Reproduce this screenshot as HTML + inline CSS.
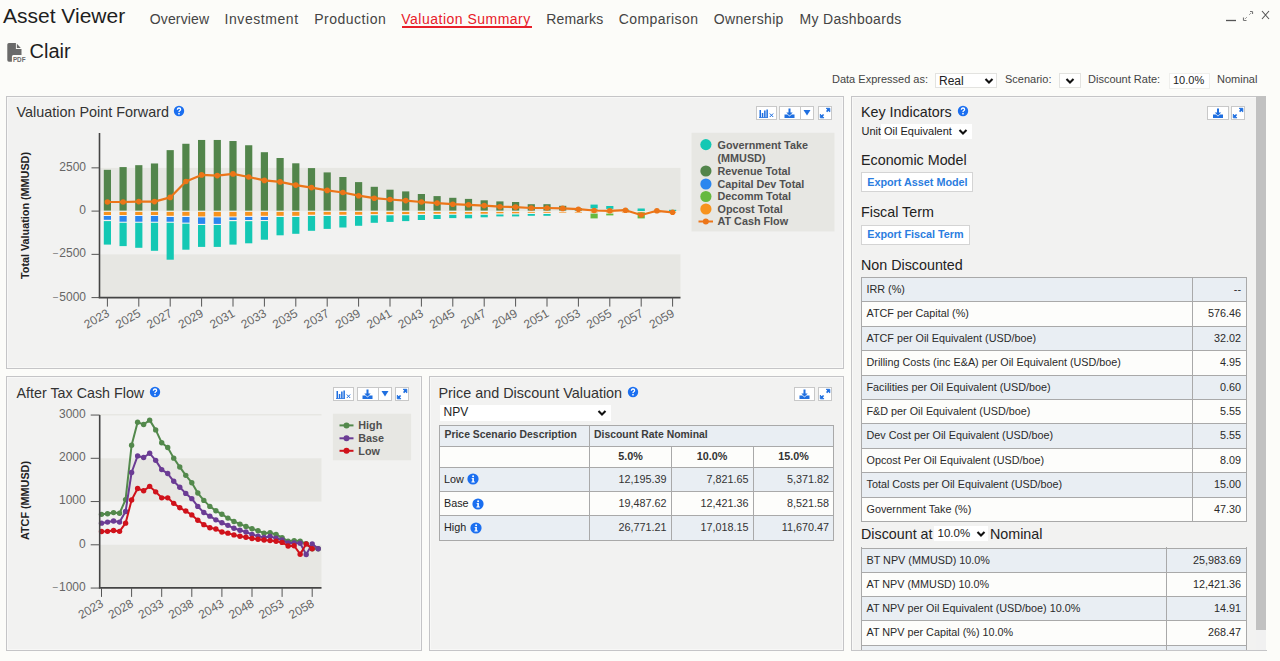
<!DOCTYPE html>
<html><head><meta charset="utf-8"><style>
html,body{margin:0;padding:0;}
body{width:1280px;height:661px;overflow:hidden;position:relative;background:#fcfcf9;font-family:"Liberation Sans", sans-serif;}
.t{position:absolute;white-space:nowrap;}
</style></head><body>
<div class="t" style="left:3.00px;top:4.97px;font-size:21px;line-height:21px;font-weight:400;color:#1e1e1e;">Asset Viewer</div>
<div class="t" style="left:149.80px;top:11.85px;font-size:14px;line-height:14px;font-weight:400;color:#444;letter-spacing:0.125px">Overview</div>
<div class="t" style="left:224.60px;top:11.85px;font-size:14px;line-height:14px;font-weight:400;color:#444;letter-spacing:0.550px">Investment</div>
<div class="t" style="left:314.20px;top:11.85px;font-size:14px;line-height:14px;font-weight:400;color:#444;letter-spacing:0.510px">Production</div>
<div class="t" style="left:401.30px;top:11.85px;font-size:14px;line-height:14px;font-weight:400;color:#e8202a;letter-spacing:0.488px">Valuation Summary</div>
<div class="t" style="left:546.20px;top:11.85px;font-size:14px;line-height:14px;font-weight:400;color:#444;letter-spacing:0.171px">Remarks</div>
<div class="t" style="left:618.70px;top:11.85px;font-size:14px;line-height:14px;font-weight:400;color:#444;letter-spacing:0.420px">Comparison</div>
<div class="t" style="left:713.80px;top:11.85px;font-size:14px;line-height:14px;font-weight:400;color:#444;letter-spacing:0.333px">Ownership</div>
<div class="t" style="left:799.50px;top:11.85px;font-size:14px;line-height:14px;font-weight:400;color:#444;letter-spacing:0.308px">My Dashboards</div>
<div style="position:absolute;left:402px;top:25.5px;width:130px;height:2px;background:#e8202a"></div>
<svg style="position:absolute;left:1220px;top:5px" width="60" height="22">
<line x1="6" y1="15.5" x2="16" y2="15.5" stroke="#555" stroke-width="1.3"/>
<path d="M25 14 L27 12 M29 10 L31 8" stroke="#999" stroke-width="0.9"/><path d="M23.5 15.5 L23.5 12.5 M23.5 15.5 L26.5 15.5" stroke="#777" stroke-width="1.2"/>
<path d="M32.5 6.5 L32.5 9 M32.5 6.5 L30 6.5" stroke="#777" stroke-width="1.2"/>
<path d="M42 6 L49 14 M49 6 L42 14" stroke="#555" stroke-width="1.1"/>
</svg>
<svg style="position:absolute;left:6px;top:42px" width="22" height="22" viewBox="0 0 22 22">
<path d="M1.3 2.6 Q1.3 1 2.9 1 L9.9 1 L9.9 6.9 L15.5 6.9 L15.5 12.9 L7.4 12.9 Q5.9 12.9 5.9 14.4 L5.9 19.7 L2.9 19.7 Q1.3 19.7 1.3 18.1 Z" fill="#6a6a6a"/>
<path d="M10.9 1.8 L10.9 5.9 L14.8 5.9 Z" fill="#6a6a6a"/>
<text x="6.9" y="19.9" font-family="Liberation Sans" font-size="8" font-weight="700" fill="#6a6a6a" textLength="12.6" lengthAdjust="spacingAndGlyphs">PDF</text>
</svg>
<div class="t" style="left:29.50px;top:40.82px;font-size:20px;line-height:20px;font-weight:400;color:#1e1e1e;">Clair</div>
<div class="t" style="left:832.00px;top:74.19px;font-size:11px;line-height:11px;font-weight:400;color:#444;">Data Expressed as:</div>
<div style="position:absolute;left:935px;top:73px;width:62px;height:15px;background:#fff;border:1px solid #e3e3e0;box-sizing:border-box"></div>
<div class="t" style="left:939.00px;top:74.84px;font-size:12px;line-height:12px;font-weight:400;color:#222;">Real</div>
<div class="t" style="left:1005.00px;top:74.19px;font-size:11px;line-height:11px;font-weight:400;color:#444;">Scenario:</div>
<div style="position:absolute;left:1059px;top:73px;width:22px;height:15px;background:#fff;border:1px solid #e3e3e0;box-sizing:border-box"></div>
<div class="t" style="left:1088.00px;top:74.19px;font-size:11px;line-height:11px;font-weight:400;color:#444;">Discount Rate:</div>
<div style="position:absolute;left:1169px;top:73px;width:41px;height:16px;background:#fff;border:1px solid #efefec;box-sizing:border-box"></div>
<div class="t" style="left:1173.00px;top:75.19px;font-size:11px;line-height:11px;font-weight:400;color:#222;">10.0%</div>
<div class="t" style="left:1217.00px;top:74.19px;font-size:11px;line-height:11px;font-weight:400;color:#444;">Nominal</div>
<svg style="position:absolute;left:984px;top:76.5px" width="10" height="8"><path d="M1.5 2 L5 5.5 L8.5 2" fill="none" stroke="#111" stroke-width="2.1"/></svg>
<svg style="position:absolute;left:1065px;top:76.5px" width="10" height="8"><path d="M1.5 2 L5 5.5 L8.5 2" fill="none" stroke="#111" stroke-width="2.1"/></svg>
<div style="position:absolute;left:6px;top:96px;width:838px;height:273px;background:#f2f2f1;border:1px solid #c5c5c7;box-sizing:border-box;box-shadow:inset 0 0 0 1px #f8f8f7"></div>
<div style="position:absolute;left:6px;top:376px;width:416px;height:275px;background:#f2f2f1;border:1px solid #c5c5c7;box-sizing:border-box;box-shadow:inset 0 0 0 1px #f8f8f7"></div>
<div style="position:absolute;left:429px;top:376px;width:415px;height:275px;background:#f2f2f1;border:1px solid #c5c5c7;box-sizing:border-box;box-shadow:inset 0 0 0 1px #f8f8f7"></div>
<div style="position:absolute;left:756px;top:106px;width:21px;height:14px;background:#fff;border:1px solid #c8c8c8;box-sizing:border-box"></div>
<svg style="position:absolute;left:756px;top:106px" width="21" height="14"><path d="M3.5 4 h1.5 v7.5 h-1.5z M5.8 7 h1.5 v4.5 h-1.5z M8.1 4.5 h1.5 v7 h-1.5z M10.4 3.5 h1.5 v8 h-1.5z" fill="#1f6fe0"/><path d="M3 11.5 h9" stroke="#1f6fe0" stroke-width="0.8"/><path d="M13.8 7.5 L17.2 11 M17.2 7.5 L13.8 11" stroke="#1f6fe0" stroke-width="1"/></svg>
<div style="position:absolute;left:779px;top:106px;width:35px;height:14px;background:#fff;border:1px solid #c8c8c8;box-sizing:border-box"></div>
<div style="position:absolute;left:800px;top:106px;width:1px;height:14px;background:#c8c8c8"></div>
<svg style="position:absolute;left:779px;top:106px" width="21" height="14"><path d="M9.5 2.5 h2 v4 h2.2 l-3.2 3.2 l-3.2 -3.2 h2.2z" fill="#1f6fe0"/><path d="M5.5 8.5 h3 l2 2 l2 -2 h3 v3.5 h-10z" fill="#1f6fe0"/></svg>
<svg style="position:absolute;left:800px;top:106px" width="14" height="14"><path d="M3.5 4 h7 l-3.5 5.5z" fill="#1f6fe0"/></svg>
<div style="position:absolute;left:818px;top:106px;width:14px;height:14px;background:#fff;border:1px solid #c8c8c8;box-sizing:border-box"></div>
<svg style="position:absolute;left:818px;top:106px" width="14" height="14"><path d="M8.2 2.3 h3.6 v3.6 z" fill="#1f6fe0" stroke="#1f6fe0" stroke-width="0.9" stroke-linejoin="round"/><path d="M10.6 3.6 L8.6 5.6" stroke="#1f6fe0" stroke-width="1.7"/><path d="M2.3 11.8 h3.6 l-3.6 -3.6 z" fill="#1f6fe0" stroke="#1f6fe0" stroke-width="0.9" stroke-linejoin="round"/><path d="M3.6 10.5 L5.6 8.5" stroke="#1f6fe0" stroke-width="1.7"/></svg>
<div style="position:absolute;left:333px;top:387px;width:21px;height:14px;background:#fff;border:1px solid #c8c8c8;box-sizing:border-box"></div>
<svg style="position:absolute;left:333px;top:387px" width="21" height="14"><path d="M3.5 4 h1.5 v7.5 h-1.5z M5.8 7 h1.5 v4.5 h-1.5z M8.1 4.5 h1.5 v7 h-1.5z M10.4 3.5 h1.5 v8 h-1.5z" fill="#1f6fe0"/><path d="M3 11.5 h9" stroke="#1f6fe0" stroke-width="0.8"/><path d="M13.8 7.5 L17.2 11 M17.2 7.5 L13.8 11" stroke="#1f6fe0" stroke-width="1"/></svg>
<div style="position:absolute;left:357px;top:387px;width:35px;height:14px;background:#fff;border:1px solid #c8c8c8;box-sizing:border-box"></div>
<div style="position:absolute;left:378px;top:387px;width:1px;height:14px;background:#c8c8c8"></div>
<svg style="position:absolute;left:357px;top:387px" width="21" height="14"><path d="M9.5 2.5 h2 v4 h2.2 l-3.2 3.2 l-3.2 -3.2 h2.2z" fill="#1f6fe0"/><path d="M5.5 8.5 h3 l2 2 l2 -2 h3 v3.5 h-10z" fill="#1f6fe0"/></svg>
<svg style="position:absolute;left:378px;top:387px" width="14" height="14"><path d="M3.5 4 h7 l-3.5 5.5z" fill="#1f6fe0"/></svg>
<div style="position:absolute;left:395px;top:387px;width:14px;height:14px;background:#fff;border:1px solid #c8c8c8;box-sizing:border-box"></div>
<svg style="position:absolute;left:395px;top:387px" width="14" height="14"><path d="M8.2 2.3 h3.6 v3.6 z" fill="#1f6fe0" stroke="#1f6fe0" stroke-width="0.9" stroke-linejoin="round"/><path d="M10.6 3.6 L8.6 5.6" stroke="#1f6fe0" stroke-width="1.7"/><path d="M2.3 11.8 h3.6 l-3.6 -3.6 z" fill="#1f6fe0" stroke="#1f6fe0" stroke-width="0.9" stroke-linejoin="round"/><path d="M3.6 10.5 L5.6 8.5" stroke="#1f6fe0" stroke-width="1.7"/></svg>
<div style="position:absolute;left:794px;top:387px;width:21px;height:14px;background:#fff;border:1px solid #c8c8c8;box-sizing:border-box"></div>
<svg style="position:absolute;left:794px;top:387px" width="21" height="14"><path d="M9.5 2.5 h2 v4 h2.2 l-3.2 3.2 l-3.2 -3.2 h2.2z" fill="#1f6fe0"/><path d="M5.5 8.5 h3 l2 2 l2 -2 h3 v3.5 h-10z" fill="#1f6fe0"/></svg>
<div style="position:absolute;left:818px;top:387px;width:14px;height:14px;background:#fff;border:1px solid #c8c8c8;box-sizing:border-box"></div>
<svg style="position:absolute;left:818px;top:387px" width="14" height="14"><path d="M8.2 2.3 h3.6 v3.6 z" fill="#1f6fe0" stroke="#1f6fe0" stroke-width="0.9" stroke-linejoin="round"/><path d="M10.6 3.6 L8.6 5.6" stroke="#1f6fe0" stroke-width="1.7"/><path d="M2.3 11.8 h3.6 l-3.6 -3.6 z" fill="#1f6fe0" stroke="#1f6fe0" stroke-width="0.9" stroke-linejoin="round"/><path d="M3.6 10.5 L5.6 8.5" stroke="#1f6fe0" stroke-width="1.7"/></svg>
<div class="t" style="left:16.50px;top:104.71px;font-size:14.4px;line-height:14.4px;font-weight:400;color:#333;">Valuation Point Forward</div>
<svg style="position:absolute;left:172.9px;top:105.4px" width="12" height="12" viewBox="0 0 12 12"><circle cx="6" cy="6" r="5.2" fill="#1b6ff0"/><path d="M4.4 4.7 Q4.4 3 6 3 Q7.6 3 7.6 4.5 Q7.6 5.3 6.7 5.8 Q6 6.2 6 7" fill="none" stroke="#fff" stroke-width="1.3"/><circle cx="6" cy="8.7" r="0.85" fill="#fff"/></svg>
<div class="t" style="left:16.50px;top:385.70px;font-size:14.3px;line-height:14.3px;font-weight:400;color:#333;">After Tax Cash Flow</div>
<svg style="position:absolute;left:149.2px;top:385.9px" width="12" height="12" viewBox="0 0 12 12"><circle cx="6" cy="6" r="5.2" fill="#1b6ff0"/><path d="M4.4 4.7 Q4.4 3 6 3 Q7.6 3 7.6 4.5 Q7.6 5.3 6.7 5.8 Q6 6.2 6 7" fill="none" stroke="#fff" stroke-width="1.3"/><circle cx="6" cy="8.7" r="0.85" fill="#fff"/></svg>
<div class="t" style="left:438.40px;top:385.81px;font-size:14.4px;line-height:14.4px;font-weight:400;color:#333;">Price and Discount Valuation</div>
<svg style="position:absolute;left:627px;top:386.3px" width="12" height="12" viewBox="0 0 12 12"><circle cx="6" cy="6" r="5.2" fill="#1b6ff0"/><path d="M4.4 4.7 Q4.4 3 6 3 Q7.6 3 7.6 4.5 Q7.6 5.3 6.7 5.8 Q6 6.2 6 7" fill="none" stroke="#fff" stroke-width="1.3"/><circle cx="6" cy="8.7" r="0.85" fill="#fff"/></svg>
<svg style="position:absolute;left:0;top:0" width="1280" height="661" font-family="Liberation Sans, sans-serif"><rect x="99.5" y="167.85" width="581.0" height="43.25" fill="#e7e7e3"/><rect x="99.5" y="254.35" width="581.0" height="43.25" fill="#e7e7e3"/><rect x="103.80" y="169.83" width="7.2" height="40.77" fill="#52854b"/><rect x="103.80" y="211.90" width="7.2" height="3.10" fill="#f7931e"/><rect x="103.80" y="216.00" width="7.2" height="3.80" fill="#2a86ef"/><rect x="103.80" y="221.10" width="7.2" height="23.50" fill="#14c8b4"/><rect x="119.50" y="167.08" width="7.2" height="43.52" fill="#52854b"/><rect x="119.50" y="211.90" width="7.2" height="3.10" fill="#f7931e"/><rect x="119.50" y="216.00" width="7.2" height="5.70" fill="#2a86ef"/><rect x="119.50" y="222.80" width="7.2" height="23.30" fill="#14c8b4"/><rect x="135.20" y="165.17" width="7.2" height="45.43" fill="#52854b"/><rect x="135.20" y="211.90" width="7.2" height="3.10" fill="#f7931e"/><rect x="135.20" y="216.00" width="7.2" height="5.70" fill="#2a86ef"/><rect x="135.20" y="222.80" width="7.2" height="25.00" fill="#14c8b4"/><rect x="150.90" y="163.47" width="7.2" height="47.13" fill="#52854b"/><rect x="150.90" y="211.90" width="7.2" height="3.10" fill="#f7931e"/><rect x="150.90" y="216.00" width="7.2" height="5.70" fill="#2a86ef"/><rect x="150.90" y="222.80" width="7.2" height="28.00" fill="#14c8b4"/><rect x="166.60" y="150.13" width="7.2" height="60.47" fill="#52854b"/><rect x="166.60" y="211.90" width="7.2" height="3.90" fill="#f7931e"/><rect x="166.60" y="217.00" width="7.2" height="4.70" fill="#2a86ef"/><rect x="166.60" y="222.80" width="7.2" height="36.90" fill="#14c8b4"/><rect x="182.30" y="143.77" width="7.2" height="66.83" fill="#52854b"/><rect x="182.30" y="211.90" width="7.2" height="3.90" fill="#f7931e"/><rect x="182.30" y="217.00" width="7.2" height="5.60" fill="#2a86ef"/><rect x="182.30" y="223.70" width="7.2" height="26.00" fill="#14c8b4"/><rect x="198.00" y="139.96" width="7.2" height="70.64" fill="#52854b"/><rect x="198.00" y="211.90" width="7.2" height="4.50" fill="#f7931e"/><rect x="198.00" y="217.40" width="7.2" height="6.50" fill="#2a86ef"/><rect x="198.00" y="225.00" width="7.2" height="21.90" fill="#14c8b4"/><rect x="213.70" y="139.96" width="7.2" height="70.64" fill="#52854b"/><rect x="213.70" y="211.90" width="7.2" height="4.50" fill="#f7931e"/><rect x="213.70" y="217.40" width="7.2" height="6.50" fill="#2a86ef"/><rect x="213.70" y="225.00" width="7.2" height="21.90" fill="#14c8b4"/><rect x="229.40" y="141.02" width="7.2" height="69.58" fill="#52854b"/><rect x="229.40" y="211.90" width="7.2" height="4.50" fill="#f7931e"/><rect x="229.40" y="217.40" width="7.2" height="2.60" fill="#2a86ef"/><rect x="229.40" y="221.20" width="7.2" height="23.40" fill="#14c8b4"/><rect x="245.10" y="145.25" width="7.2" height="65.35" fill="#52854b"/><rect x="245.10" y="211.90" width="7.2" height="3.90" fill="#f7931e"/><rect x="245.10" y="217.00" width="7.2" height="3.00" fill="#2a86ef"/><rect x="245.10" y="221.20" width="7.2" height="22.10" fill="#14c8b4"/><rect x="260.80" y="152.20" width="7.2" height="58.40" fill="#52854b"/><rect x="260.80" y="211.90" width="7.2" height="3.90" fill="#f7931e"/><rect x="260.80" y="217.00" width="7.2" height="3.00" fill="#2a86ef"/><rect x="260.80" y="221.10" width="7.2" height="18.60" fill="#14c8b4"/><rect x="276.50" y="158.00" width="7.2" height="52.60" fill="#52854b"/><rect x="276.50" y="211.90" width="7.2" height="3.90" fill="#f7931e"/><rect x="276.50" y="217.00" width="7.2" height="18.30" fill="#14c8b4"/><rect x="292.20" y="163.30" width="7.2" height="47.30" fill="#52854b"/><rect x="292.20" y="211.90" width="7.2" height="3.90" fill="#f7931e"/><rect x="292.20" y="217.00" width="7.2" height="16.80" fill="#14c8b4"/><rect x="307.90" y="168.10" width="7.2" height="42.50" fill="#52854b"/><rect x="307.90" y="211.90" width="7.2" height="2.80" fill="#f7931e"/><rect x="307.90" y="216.00" width="7.2" height="14.80" fill="#14c8b4"/><rect x="323.60" y="172.40" width="7.2" height="38.20" fill="#52854b"/><rect x="323.60" y="211.90" width="7.2" height="2.80" fill="#f7931e"/><rect x="323.60" y="216.00" width="7.2" height="12.90" fill="#14c8b4"/><rect x="339.30" y="177.00" width="7.2" height="33.60" fill="#52854b"/><rect x="339.30" y="211.90" width="7.2" height="2.80" fill="#f7931e"/><rect x="339.30" y="216.00" width="7.2" height="11.50" fill="#14c8b4"/><rect x="355.00" y="182.10" width="7.2" height="28.50" fill="#52854b"/><rect x="355.00" y="211.90" width="7.2" height="2.80" fill="#f7931e"/><rect x="355.00" y="216.00" width="7.2" height="9.80" fill="#14c8b4"/><rect x="370.70" y="186.80" width="7.2" height="23.80" fill="#52854b"/><rect x="370.70" y="211.90" width="7.2" height="2.20" fill="#f7931e"/><rect x="370.70" y="215.30" width="7.2" height="7.50" fill="#14c8b4"/><rect x="386.40" y="189.70" width="7.2" height="20.90" fill="#52854b"/><rect x="386.40" y="211.90" width="7.2" height="2.20" fill="#f7931e"/><rect x="386.40" y="215.30" width="7.2" height="6.60" fill="#14c8b4"/><rect x="402.10" y="191.40" width="7.2" height="19.20" fill="#52854b"/><rect x="402.10" y="211.90" width="7.2" height="2.20" fill="#f7931e"/><rect x="402.10" y="215.30" width="7.2" height="5.80" fill="#14c8b4"/><rect x="417.80" y="194.00" width="7.2" height="16.60" fill="#52854b"/><rect x="417.80" y="212.00" width="7.2" height="1.70" fill="#f7931e"/><rect x="417.80" y="215.00" width="7.2" height="5.00" fill="#14c8b4"/><rect x="433.50" y="196.10" width="7.2" height="14.50" fill="#52854b"/><rect x="433.50" y="212.00" width="7.2" height="1.70" fill="#f7931e"/><rect x="433.50" y="215.00" width="7.2" height="4.00" fill="#14c8b4"/><rect x="449.20" y="197.80" width="7.2" height="12.80" fill="#52854b"/><rect x="449.20" y="212.00" width="7.2" height="1.70" fill="#f7931e"/><rect x="449.20" y="214.80" width="7.2" height="3.30" fill="#14c8b4"/><rect x="464.90" y="198.90" width="7.2" height="11.70" fill="#52854b"/><rect x="464.90" y="212.00" width="7.2" height="1.70" fill="#f7931e"/><rect x="464.90" y="214.80" width="7.2" height="3.50" fill="#14c8b4"/><rect x="480.60" y="200.30" width="7.2" height="10.30" fill="#52854b"/><rect x="480.60" y="212.00" width="7.2" height="1.70" fill="#f7931e"/><rect x="480.60" y="214.80" width="7.2" height="2.50" fill="#14c8b4"/><rect x="496.30" y="201.40" width="7.2" height="9.20" fill="#52854b"/><rect x="496.30" y="211.90" width="7.2" height="1.40" fill="#f7931e"/><rect x="496.30" y="214.50" width="7.2" height="1.90" fill="#14c8b4"/><rect x="512.00" y="202.00" width="7.2" height="8.60" fill="#52854b"/><rect x="512.00" y="211.90" width="7.2" height="1.40" fill="#f7931e"/><rect x="512.00" y="214.50" width="7.2" height="1.90" fill="#14c8b4"/><rect x="527.70" y="204.20" width="7.2" height="6.40" fill="#52854b"/><rect x="527.70" y="211.90" width="7.2" height="0.90" fill="#f7931e"/><rect x="527.70" y="214.00" width="7.2" height="1.80" fill="#14c8b4"/><rect x="543.40" y="204.20" width="7.2" height="6.40" fill="#52854b"/><rect x="543.40" y="211.90" width="7.2" height="0.90" fill="#f7931e"/><rect x="543.40" y="214.00" width="7.2" height="1.80" fill="#14c8b4"/><rect x="559.10" y="205.80" width="7.2" height="4.80" fill="#52854b"/><rect x="559.10" y="211.90" width="7.2" height="0.70" fill="#f7931e"/><rect x="574.80" y="208.30" width="7.2" height="2.30" fill="#52854b"/><rect x="574.80" y="211.90" width="7.2" height="0.70" fill="#f7931e"/><rect x="590.50" y="209.50" width="7.2" height="1.10" fill="#52854b"/><rect x="590.50" y="211.90" width="7.2" height="0.60" fill="#f7931e"/><rect x="606.20" y="210.20" width="7.2" height="0.40" fill="#52854b"/><rect x="606.20" y="211.90" width="7.2" height="0.60" fill="#f7931e"/><rect x="621.90" y="210.50" width="7.2" height="0.10" fill="#52854b"/><rect x="621.90" y="211.90" width="7.2" height="0.60" fill="#f7931e"/><rect x="637.60" y="210.30" width="7.2" height="0.30" fill="#52854b"/><rect x="637.60" y="211.90" width="7.2" height="0.60" fill="#f7931e"/><rect x="653.30" y="210.50" width="7.2" height="0.10" fill="#52854b"/><rect x="653.30" y="211.90" width="7.2" height="0.60" fill="#f7931e"/><rect x="669.00" y="211.90" width="7.2" height="0.60" fill="#f7931e"/><rect x="590.50" y="204.60" width="7.2" height="3.80" fill="#14c8b4"/><rect x="590.50" y="213.60" width="7.2" height="4.80" fill="#66b93f"/><rect x="606.20" y="206.00" width="7.2" height="2.90" fill="#14c8b4"/><rect x="606.20" y="213.60" width="7.2" height="1.80" fill="#66b93f"/><rect x="637.60" y="208.50" width="7.2" height="2.50" fill="#14c8b4"/><rect x="637.60" y="212.40" width="7.2" height="6.00" fill="#66b93f"/><rect x="669.00" y="209.80" width="7.2" height="1.20" fill="#14c8b4"/><rect x="574.80" y="209.00" width="7.2" height="1.20" fill="#14c8b4"/><rect x="621.90" y="209.50" width="7.2" height="0.80" fill="#14c8b4"/><polyline points="107.40,202.00 123.10,202.00 138.80,201.60 154.50,201.60 170.20,197.40 185.90,181.50 201.60,174.90 217.30,175.60 233.00,173.90 248.70,177.00 264.40,180.40 280.10,181.90 295.80,185.10 311.50,187.60 327.20,190.40 342.90,192.50 358.60,195.70 374.30,198.20 390.00,199.50 405.70,200.60 421.40,202.00 437.10,203.10 452.80,204.20 468.50,204.80 484.20,205.60 499.90,206.70 515.60,207.10 531.30,208.00 547.00,208.00 562.70,208.40 578.40,209.20 594.10,210.50 609.80,210.80 625.50,210.20 641.20,215.00 656.90,210.80 672.60,212.30" fill="none" stroke="#ec7518" stroke-width="2.2" stroke-linejoin="round"/><circle cx="107.40" cy="202.00" r="2.8" fill="#ec7518"/><circle cx="123.10" cy="202.00" r="2.8" fill="#ec7518"/><circle cx="138.80" cy="201.60" r="2.8" fill="#ec7518"/><circle cx="154.50" cy="201.60" r="2.8" fill="#ec7518"/><circle cx="170.20" cy="197.40" r="2.8" fill="#ec7518"/><circle cx="185.90" cy="181.50" r="2.8" fill="#ec7518"/><circle cx="201.60" cy="174.90" r="2.8" fill="#ec7518"/><circle cx="217.30" cy="175.60" r="2.8" fill="#ec7518"/><circle cx="233.00" cy="173.90" r="2.8" fill="#ec7518"/><circle cx="248.70" cy="177.00" r="2.8" fill="#ec7518"/><circle cx="264.40" cy="180.40" r="2.8" fill="#ec7518"/><circle cx="280.10" cy="181.90" r="2.8" fill="#ec7518"/><circle cx="295.80" cy="185.10" r="2.8" fill="#ec7518"/><circle cx="311.50" cy="187.60" r="2.8" fill="#ec7518"/><circle cx="327.20" cy="190.40" r="2.8" fill="#ec7518"/><circle cx="342.90" cy="192.50" r="2.8" fill="#ec7518"/><circle cx="358.60" cy="195.70" r="2.8" fill="#ec7518"/><circle cx="374.30" cy="198.20" r="2.8" fill="#ec7518"/><circle cx="390.00" cy="199.50" r="2.8" fill="#ec7518"/><circle cx="405.70" cy="200.60" r="2.8" fill="#ec7518"/><circle cx="421.40" cy="202.00" r="2.8" fill="#ec7518"/><circle cx="437.10" cy="203.10" r="2.8" fill="#ec7518"/><circle cx="452.80" cy="204.20" r="2.8" fill="#ec7518"/><circle cx="468.50" cy="204.80" r="2.8" fill="#ec7518"/><circle cx="484.20" cy="205.60" r="2.8" fill="#ec7518"/><circle cx="499.90" cy="206.70" r="2.8" fill="#ec7518"/><circle cx="515.60" cy="207.10" r="2.8" fill="#ec7518"/><circle cx="531.30" cy="208.00" r="2.8" fill="#ec7518"/><circle cx="547.00" cy="208.00" r="2.8" fill="#ec7518"/><circle cx="562.70" cy="208.40" r="2.8" fill="#ec7518"/><circle cx="578.40" cy="209.20" r="2.8" fill="#ec7518"/><circle cx="594.10" cy="210.50" r="2.8" fill="#ec7518"/><circle cx="609.80" cy="210.80" r="2.8" fill="#ec7518"/><circle cx="625.50" cy="210.20" r="2.8" fill="#ec7518"/><circle cx="641.20" cy="215.00" r="2.8" fill="#ec7518"/><circle cx="656.90" cy="210.80" r="2.8" fill="#ec7518"/><circle cx="672.60" cy="212.30" r="2.8" fill="#ec7518"/><line x1="99.5" y1="133" x2="99.5" y2="298.1" stroke="#444" stroke-width="1.6"/><line x1="98.7" y1="297.6" x2="680.5" y2="297.6" stroke="#444" stroke-width="1.8"/><line x1="91.5" y1="167.85" x2="99.5" y2="167.85" stroke="#555" stroke-width="1"/><text x="86.0" y="170.75" text-anchor="end" font-size="12" fill="#666">2500</text><line x1="91.5" y1="211.10" x2="99.5" y2="211.10" stroke="#555" stroke-width="1"/><text x="86.0" y="214.00" text-anchor="end" font-size="12" fill="#666">0</text><line x1="91.5" y1="254.35" x2="99.5" y2="254.35" stroke="#555" stroke-width="1"/><text x="86.0" y="257.25" text-anchor="end" font-size="12" fill="#666"><tspan font-size="9" dy="-1">&#8211;</tspan><tspan dx="1.2" dy="1">2500</tspan></text><line x1="91.5" y1="297.60" x2="99.5" y2="297.60" stroke="#555" stroke-width="1"/><text x="86.0" y="300.50" text-anchor="end" font-size="12" fill="#666"><tspan font-size="9" dy="-1">&#8211;</tspan><tspan dx="1.2" dy="1">5000</tspan></text><line x1="107.40" y1="297.6" x2="107.40" y2="306.6" stroke="#555" stroke-width="1"/><text transform="translate(110.20,315.6) rotate(-30)" text-anchor="end" font-size="12" fill="#666">2023</text><line x1="138.80" y1="297.6" x2="138.80" y2="306.6" stroke="#555" stroke-width="1"/><text transform="translate(141.60,315.6) rotate(-30)" text-anchor="end" font-size="12" fill="#666">2025</text><line x1="170.20" y1="297.6" x2="170.20" y2="306.6" stroke="#555" stroke-width="1"/><text transform="translate(173.00,315.6) rotate(-30)" text-anchor="end" font-size="12" fill="#666">2027</text><line x1="201.60" y1="297.6" x2="201.60" y2="306.6" stroke="#555" stroke-width="1"/><text transform="translate(204.40,315.6) rotate(-30)" text-anchor="end" font-size="12" fill="#666">2029</text><line x1="233.00" y1="297.6" x2="233.00" y2="306.6" stroke="#555" stroke-width="1"/><text transform="translate(235.80,315.6) rotate(-30)" text-anchor="end" font-size="12" fill="#666">2031</text><line x1="264.40" y1="297.6" x2="264.40" y2="306.6" stroke="#555" stroke-width="1"/><text transform="translate(267.20,315.6) rotate(-30)" text-anchor="end" font-size="12" fill="#666">2033</text><line x1="295.80" y1="297.6" x2="295.80" y2="306.6" stroke="#555" stroke-width="1"/><text transform="translate(298.60,315.6) rotate(-30)" text-anchor="end" font-size="12" fill="#666">2035</text><line x1="327.20" y1="297.6" x2="327.20" y2="306.6" stroke="#555" stroke-width="1"/><text transform="translate(330.00,315.6) rotate(-30)" text-anchor="end" font-size="12" fill="#666">2037</text><line x1="358.60" y1="297.6" x2="358.60" y2="306.6" stroke="#555" stroke-width="1"/><text transform="translate(361.40,315.6) rotate(-30)" text-anchor="end" font-size="12" fill="#666">2039</text><line x1="390.00" y1="297.6" x2="390.00" y2="306.6" stroke="#555" stroke-width="1"/><text transform="translate(392.80,315.6) rotate(-30)" text-anchor="end" font-size="12" fill="#666">2041</text><line x1="421.40" y1="297.6" x2="421.40" y2="306.6" stroke="#555" stroke-width="1"/><text transform="translate(424.20,315.6) rotate(-30)" text-anchor="end" font-size="12" fill="#666">2043</text><line x1="452.80" y1="297.6" x2="452.80" y2="306.6" stroke="#555" stroke-width="1"/><text transform="translate(455.60,315.6) rotate(-30)" text-anchor="end" font-size="12" fill="#666">2045</text><line x1="484.20" y1="297.6" x2="484.20" y2="306.6" stroke="#555" stroke-width="1"/><text transform="translate(487.00,315.6) rotate(-30)" text-anchor="end" font-size="12" fill="#666">2047</text><line x1="515.60" y1="297.6" x2="515.60" y2="306.6" stroke="#555" stroke-width="1"/><text transform="translate(518.40,315.6) rotate(-30)" text-anchor="end" font-size="12" fill="#666">2049</text><line x1="547.00" y1="297.6" x2="547.00" y2="306.6" stroke="#555" stroke-width="1"/><text transform="translate(549.80,315.6) rotate(-30)" text-anchor="end" font-size="12" fill="#666">2051</text><line x1="578.40" y1="297.6" x2="578.40" y2="306.6" stroke="#555" stroke-width="1"/><text transform="translate(581.20,315.6) rotate(-30)" text-anchor="end" font-size="12" fill="#666">2053</text><line x1="609.80" y1="297.6" x2="609.80" y2="306.6" stroke="#555" stroke-width="1"/><text transform="translate(612.60,315.6) rotate(-30)" text-anchor="end" font-size="12" fill="#666">2055</text><line x1="641.20" y1="297.6" x2="641.20" y2="306.6" stroke="#555" stroke-width="1"/><text transform="translate(644.00,315.6) rotate(-30)" text-anchor="end" font-size="12" fill="#666">2057</text><line x1="672.60" y1="297.6" x2="672.60" y2="306.6" stroke="#555" stroke-width="1"/><text transform="translate(675.40,315.6) rotate(-30)" text-anchor="end" font-size="12" fill="#666">2059</text><text transform="translate(28.6,215.5) rotate(-90)" text-anchor="middle" font-size="10.8" font-weight="700" fill="#222">Total Valuation (MMUSD)</text><rect x="691.5" y="132.8" width="143" height="98.6" fill="#e7e7e3"/><circle cx="705.9" cy="144.6" r="5.6" fill="#14c8b4"/><text x="717.5" y="148.5" font-size="10.8" font-weight="700" fill="#505050">Government Take</text><text x="717.5" y="161.9" font-size="10.8" font-weight="700" fill="#505050">(MMUSD)</text><circle cx="705.9" cy="171.0" r="5.6" fill="#52854b"/><text x="717.5" y="174.9" font-size="10.8" font-weight="700" fill="#505050">Revenue Total</text><circle cx="705.9" cy="184.0" r="5.6" fill="#2a86ef"/><text x="717.5" y="187.9" font-size="10.8" font-weight="700" fill="#505050">Capital Dev Total</text><circle cx="705.9" cy="196.5" r="5.6" fill="#66b93f"/><text x="717.5" y="200.4" font-size="10.8" font-weight="700" fill="#505050">Decomm Total</text><circle cx="705.9" cy="209.0" r="5.6" fill="#f7931e"/><text x="717.5" y="212.9" font-size="10.8" font-weight="700" fill="#505050">Opcost Total</text><line x1="698.5" y1="221.5" x2="713" y2="221.5" stroke="#ec7518" stroke-width="2"/><circle cx="705.8" cy="221.5" r="3" fill="#ec7518"/><text x="717.5" y="225.4" font-size="10.8" font-weight="700" fill="#505050">AT Cash Flow</text><rect x="99.7" y="458.30" width="221.8" height="43.25" fill="#e7e7e3"/><rect x="99.7" y="544.80" width="221.8" height="43.25" fill="#e7e7e3"/><rect x="99.7" y="414.0" width="221.8" height="1.5" fill="#e7e7e3"/><polyline points="101.50,514.35 107.52,513.70 113.54,512.58 119.56,513.27 125.58,499.60 131.60,445.32 137.62,422.14 143.64,424.56 149.66,420.15 155.68,429.88 161.70,442.69 167.72,447.53 173.74,458.13 179.76,466.95 185.78,475.34 191.80,482.69 197.82,493.07 203.84,500.38 209.86,506.39 215.88,510.81 221.90,514.22 227.92,518.11 233.94,521.44 239.96,524.17 245.98,526.38 252.00,528.75 258.02,530.70 264.04,533.17 270.06,532.69 276.08,534.51 282.10,537.62 288.12,541.21 294.14,540.60 300.16,541.21 306.18,543.72 312.20,548.69 318.22,548.69" fill="none" stroke="#53894c" stroke-width="2" stroke-linejoin="round"/><circle cx="101.50" cy="514.35" r="2.7" fill="#53894c"/><circle cx="107.52" cy="513.70" r="2.7" fill="#53894c"/><circle cx="113.54" cy="512.58" r="2.7" fill="#53894c"/><circle cx="119.56" cy="513.27" r="2.7" fill="#53894c"/><circle cx="125.58" cy="499.60" r="2.7" fill="#53894c"/><circle cx="131.60" cy="445.32" r="2.7" fill="#53894c"/><circle cx="137.62" cy="422.14" r="2.7" fill="#53894c"/><circle cx="143.64" cy="424.56" r="2.7" fill="#53894c"/><circle cx="149.66" cy="420.15" r="2.7" fill="#53894c"/><circle cx="155.68" cy="429.88" r="2.7" fill="#53894c"/><circle cx="161.70" cy="442.69" r="2.7" fill="#53894c"/><circle cx="167.72" cy="447.53" r="2.7" fill="#53894c"/><circle cx="173.74" cy="458.13" r="2.7" fill="#53894c"/><circle cx="179.76" cy="466.95" r="2.7" fill="#53894c"/><circle cx="185.78" cy="475.34" r="2.7" fill="#53894c"/><circle cx="191.80" cy="482.69" r="2.7" fill="#53894c"/><circle cx="197.82" cy="493.07" r="2.7" fill="#53894c"/><circle cx="203.84" cy="500.38" r="2.7" fill="#53894c"/><circle cx="209.86" cy="506.39" r="2.7" fill="#53894c"/><circle cx="215.88" cy="510.81" r="2.7" fill="#53894c"/><circle cx="221.90" cy="514.22" r="2.7" fill="#53894c"/><circle cx="227.92" cy="518.11" r="2.7" fill="#53894c"/><circle cx="233.94" cy="521.44" r="2.7" fill="#53894c"/><circle cx="239.96" cy="524.17" r="2.7" fill="#53894c"/><circle cx="245.98" cy="526.38" r="2.7" fill="#53894c"/><circle cx="252.00" cy="528.75" r="2.7" fill="#53894c"/><circle cx="258.02" cy="530.70" r="2.7" fill="#53894c"/><circle cx="264.04" cy="533.17" r="2.7" fill="#53894c"/><circle cx="270.06" cy="532.69" r="2.7" fill="#53894c"/><circle cx="276.08" cy="534.51" r="2.7" fill="#53894c"/><circle cx="282.10" cy="537.62" r="2.7" fill="#53894c"/><circle cx="288.12" cy="541.21" r="2.7" fill="#53894c"/><circle cx="294.14" cy="540.60" r="2.7" fill="#53894c"/><circle cx="300.16" cy="541.21" r="2.7" fill="#53894c"/><circle cx="306.18" cy="543.72" r="2.7" fill="#53894c"/><circle cx="312.20" cy="548.69" r="2.7" fill="#53894c"/><circle cx="318.22" cy="548.69" r="2.7" fill="#53894c"/><polyline points="101.50,523.17 107.52,522.09 113.54,521.01 119.56,522.09 125.58,511.50 131.60,472.49 137.62,455.92 143.64,457.48 149.66,453.28 155.68,460.33 161.70,469.59 167.72,473.57 173.74,481.27 179.76,487.23 185.78,493.42 191.80,498.65 197.82,506.39 203.84,512.49 209.86,516.13 215.88,519.84 221.90,522.74 227.92,525.34 233.94,528.28 239.96,530.27 245.98,532.00 252.00,534.38 258.02,536.11 264.04,537.49 270.06,536.41 276.08,538.18 282.10,540.00 288.12,542.98 294.14,542.98 300.16,543.29 306.18,554.53 312.20,543.89 318.22,548.78" fill="none" stroke="#6b3c94" stroke-width="2" stroke-linejoin="round"/><circle cx="101.50" cy="523.17" r="2.7" fill="#6b3c94"/><circle cx="107.52" cy="522.09" r="2.7" fill="#6b3c94"/><circle cx="113.54" cy="521.01" r="2.7" fill="#6b3c94"/><circle cx="119.56" cy="522.09" r="2.7" fill="#6b3c94"/><circle cx="125.58" cy="511.50" r="2.7" fill="#6b3c94"/><circle cx="131.60" cy="472.49" r="2.7" fill="#6b3c94"/><circle cx="137.62" cy="455.92" r="2.7" fill="#6b3c94"/><circle cx="143.64" cy="457.48" r="2.7" fill="#6b3c94"/><circle cx="149.66" cy="453.28" r="2.7" fill="#6b3c94"/><circle cx="155.68" cy="460.33" r="2.7" fill="#6b3c94"/><circle cx="161.70" cy="469.59" r="2.7" fill="#6b3c94"/><circle cx="167.72" cy="473.57" r="2.7" fill="#6b3c94"/><circle cx="173.74" cy="481.27" r="2.7" fill="#6b3c94"/><circle cx="179.76" cy="487.23" r="2.7" fill="#6b3c94"/><circle cx="185.78" cy="493.42" r="2.7" fill="#6b3c94"/><circle cx="191.80" cy="498.65" r="2.7" fill="#6b3c94"/><circle cx="197.82" cy="506.39" r="2.7" fill="#6b3c94"/><circle cx="203.84" cy="512.49" r="2.7" fill="#6b3c94"/><circle cx="209.86" cy="516.13" r="2.7" fill="#6b3c94"/><circle cx="215.88" cy="519.84" r="2.7" fill="#6b3c94"/><circle cx="221.90" cy="522.74" r="2.7" fill="#6b3c94"/><circle cx="227.92" cy="525.34" r="2.7" fill="#6b3c94"/><circle cx="233.94" cy="528.28" r="2.7" fill="#6b3c94"/><circle cx="239.96" cy="530.27" r="2.7" fill="#6b3c94"/><circle cx="245.98" cy="532.00" r="2.7" fill="#6b3c94"/><circle cx="252.00" cy="534.38" r="2.7" fill="#6b3c94"/><circle cx="258.02" cy="536.11" r="2.7" fill="#6b3c94"/><circle cx="264.04" cy="537.49" r="2.7" fill="#6b3c94"/><circle cx="270.06" cy="536.41" r="2.7" fill="#6b3c94"/><circle cx="276.08" cy="538.18" r="2.7" fill="#6b3c94"/><circle cx="282.10" cy="540.00" r="2.7" fill="#6b3c94"/><circle cx="288.12" cy="542.98" r="2.7" fill="#6b3c94"/><circle cx="294.14" cy="542.98" r="2.7" fill="#6b3c94"/><circle cx="300.16" cy="543.29" r="2.7" fill="#6b3c94"/><circle cx="306.18" cy="554.53" r="2.7" fill="#6b3c94"/><circle cx="312.20" cy="543.89" r="2.7" fill="#6b3c94"/><circle cx="318.22" cy="548.78" r="2.7" fill="#6b3c94"/><polyline points="101.50,531.57 107.52,531.35 113.54,530.48 119.56,531.35 125.58,523.17 131.60,500.04 137.62,488.57 143.64,490.74 149.66,486.37 155.68,491.86 161.70,497.83 167.72,497.83 173.74,503.37 179.76,507.78 185.78,511.06 191.80,514.91 197.82,520.23 203.84,524.65 209.86,527.76 215.88,529.06 221.90,532.00 227.92,533.17 233.94,534.90 239.96,536.28 245.98,537.32 252.00,538.49 258.02,539.22 264.04,540.00 270.06,540.60 276.08,541.21 282.10,542.42 288.12,546.01 294.14,545.79 300.16,554.19 306.18,543.89 312.20,548.78" fill="none" stroke="#d0121b" stroke-width="2" stroke-linejoin="round"/><circle cx="101.50" cy="531.57" r="2.7" fill="#d0121b"/><circle cx="107.52" cy="531.35" r="2.7" fill="#d0121b"/><circle cx="113.54" cy="530.48" r="2.7" fill="#d0121b"/><circle cx="119.56" cy="531.35" r="2.7" fill="#d0121b"/><circle cx="125.58" cy="523.17" r="2.7" fill="#d0121b"/><circle cx="131.60" cy="500.04" r="2.7" fill="#d0121b"/><circle cx="137.62" cy="488.57" r="2.7" fill="#d0121b"/><circle cx="143.64" cy="490.74" r="2.7" fill="#d0121b"/><circle cx="149.66" cy="486.37" r="2.7" fill="#d0121b"/><circle cx="155.68" cy="491.86" r="2.7" fill="#d0121b"/><circle cx="161.70" cy="497.83" r="2.7" fill="#d0121b"/><circle cx="167.72" cy="497.83" r="2.7" fill="#d0121b"/><circle cx="173.74" cy="503.37" r="2.7" fill="#d0121b"/><circle cx="179.76" cy="507.78" r="2.7" fill="#d0121b"/><circle cx="185.78" cy="511.06" r="2.7" fill="#d0121b"/><circle cx="191.80" cy="514.91" r="2.7" fill="#d0121b"/><circle cx="197.82" cy="520.23" r="2.7" fill="#d0121b"/><circle cx="203.84" cy="524.65" r="2.7" fill="#d0121b"/><circle cx="209.86" cy="527.76" r="2.7" fill="#d0121b"/><circle cx="215.88" cy="529.06" r="2.7" fill="#d0121b"/><circle cx="221.90" cy="532.00" r="2.7" fill="#d0121b"/><circle cx="227.92" cy="533.17" r="2.7" fill="#d0121b"/><circle cx="233.94" cy="534.90" r="2.7" fill="#d0121b"/><circle cx="239.96" cy="536.28" r="2.7" fill="#d0121b"/><circle cx="245.98" cy="537.32" r="2.7" fill="#d0121b"/><circle cx="252.00" cy="538.49" r="2.7" fill="#d0121b"/><circle cx="258.02" cy="539.22" r="2.7" fill="#d0121b"/><circle cx="264.04" cy="540.00" r="2.7" fill="#d0121b"/><circle cx="270.06" cy="540.60" r="2.7" fill="#d0121b"/><circle cx="276.08" cy="541.21" r="2.7" fill="#d0121b"/><circle cx="282.10" cy="542.42" r="2.7" fill="#d0121b"/><circle cx="288.12" cy="546.01" r="2.7" fill="#d0121b"/><circle cx="294.14" cy="545.79" r="2.7" fill="#d0121b"/><circle cx="300.16" cy="554.19" r="2.7" fill="#d0121b"/><circle cx="306.18" cy="543.89" r="2.7" fill="#d0121b"/><circle cx="312.20" cy="548.78" r="2.7" fill="#d0121b"/><line x1="99.7" y1="415.0" x2="99.7" y2="588.4" stroke="#444" stroke-width="1.6"/><line x1="98.9" y1="587.9" x2="321.5" y2="587.9" stroke="#444" stroke-width="1.8"/><line x1="90.7" y1="415.05" x2="99.7" y2="415.05" stroke="#555" stroke-width="1"/><text x="85.7" y="417.95" text-anchor="end" font-size="12" fill="#666">3000</text><line x1="90.7" y1="458.30" x2="99.7" y2="458.30" stroke="#555" stroke-width="1"/><text x="85.7" y="461.20" text-anchor="end" font-size="12" fill="#666">2000</text><line x1="90.7" y1="501.55" x2="99.7" y2="501.55" stroke="#555" stroke-width="1"/><text x="85.7" y="504.45" text-anchor="end" font-size="12" fill="#666">1000</text><line x1="90.7" y1="544.80" x2="99.7" y2="544.80" stroke="#555" stroke-width="1"/><text x="85.7" y="547.70" text-anchor="end" font-size="12" fill="#666">0</text><line x1="90.7" y1="588.05" x2="99.7" y2="588.05" stroke="#555" stroke-width="1"/><text x="85.7" y="590.95" text-anchor="end" font-size="12" fill="#666"><tspan font-size="9" dy="-1">&#8211;</tspan><tspan dx="1.2" dy="1">1000</tspan></text><line x1="101.50" y1="587.9" x2="101.50" y2="596.9" stroke="#555" stroke-width="1"/><text transform="translate(104.30,605.9) rotate(-30)" text-anchor="end" font-size="12" fill="#666">2023</text><line x1="131.60" y1="587.9" x2="131.60" y2="596.9" stroke="#555" stroke-width="1"/><text transform="translate(134.40,605.9) rotate(-30)" text-anchor="end" font-size="12" fill="#666">2028</text><line x1="161.70" y1="587.9" x2="161.70" y2="596.9" stroke="#555" stroke-width="1"/><text transform="translate(164.50,605.9) rotate(-30)" text-anchor="end" font-size="12" fill="#666">2033</text><line x1="191.80" y1="587.9" x2="191.80" y2="596.9" stroke="#555" stroke-width="1"/><text transform="translate(194.60,605.9) rotate(-30)" text-anchor="end" font-size="12" fill="#666">2038</text><line x1="221.90" y1="587.9" x2="221.90" y2="596.9" stroke="#555" stroke-width="1"/><text transform="translate(224.70,605.9) rotate(-30)" text-anchor="end" font-size="12" fill="#666">2043</text><line x1="252.00" y1="587.9" x2="252.00" y2="596.9" stroke="#555" stroke-width="1"/><text transform="translate(254.80,605.9) rotate(-30)" text-anchor="end" font-size="12" fill="#666">2048</text><line x1="282.10" y1="587.9" x2="282.10" y2="596.9" stroke="#555" stroke-width="1"/><text transform="translate(284.90,605.9) rotate(-30)" text-anchor="end" font-size="12" fill="#666">2053</text><line x1="312.20" y1="587.9" x2="312.20" y2="596.9" stroke="#555" stroke-width="1"/><text transform="translate(315.00,605.9) rotate(-30)" text-anchor="end" font-size="12" fill="#666">2058</text><text transform="translate(29.1,500.5) rotate(-90)" text-anchor="middle" font-size="10.8" font-weight="700" fill="#222">ATCF (MMUSD)</text><rect x="332.9" y="413.7" width="78.2" height="46.6" fill="#e7e7e3"/><line x1="339.5" y1="425.4" x2="353.5" y2="425.4" stroke="#53894c" stroke-width="2"/><circle cx="346.5" cy="425.4" r="3" fill="#53894c"/><text x="358.3" y="429.29999999999995" font-size="10.8" font-weight="700" fill="#505050">High</text><line x1="339.5" y1="438.3" x2="353.5" y2="438.3" stroke="#6b3c94" stroke-width="2"/><circle cx="346.5" cy="438.3" r="3" fill="#6b3c94"/><text x="358.3" y="442.2" font-size="10.8" font-weight="700" fill="#505050">Base</text><line x1="339.5" y1="450.8" x2="353.5" y2="450.8" stroke="#d0121b" stroke-width="2"/><circle cx="346.5" cy="450.8" r="3" fill="#d0121b"/><text x="358.3" y="454.7" font-size="10.8" font-weight="700" fill="#505050">Low</text></svg>
<div style="position:absolute;left:440px;top:405px;width:171px;height:16px;background:#fff"></div>
<div class="t" style="left:443.50px;top:406.34px;font-size:12px;line-height:12px;font-weight:400;color:#222;">NPV</div>
<svg style="position:absolute;left:596.7px;top:408.5px" width="10" height="8"><path d="M1.5 2 L5 5.5 L8.5 2" fill="none" stroke="#111" stroke-width="2.1"/></svg>
<div style="position:absolute;left:439px;top:425px;width:395px;height:21px;background:#e9eef3"></div>
<div style="position:absolute;left:439px;top:446px;width:395px;height:21px;background:#fdfdfb"></div>
<div style="position:absolute;left:439px;top:467px;width:395px;height:24px;background:#e9eef3"></div>
<div style="position:absolute;left:439px;top:491px;width:395px;height:24px;background:#fdfdfb"></div>
<div style="position:absolute;left:439px;top:515px;width:395px;height:25px;background:#e9eef3"></div>
<div style="position:absolute;left:439px;top:425px;width:395px;height:1px;background:#a9a9a9"></div>
<div style="position:absolute;left:439px;top:446px;width:395px;height:1px;background:#a9a9a9"></div>
<div style="position:absolute;left:439px;top:467px;width:395px;height:1px;background:#a9a9a9"></div>
<div style="position:absolute;left:439px;top:491px;width:395px;height:1px;background:#a9a9a9"></div>
<div style="position:absolute;left:439px;top:515px;width:395px;height:1px;background:#a9a9a9"></div>
<div style="position:absolute;left:439px;top:540px;width:395px;height:1px;background:#a9a9a9"></div>
<div style="position:absolute;left:439px;top:425px;width:1px;height:116px;background:#a9a9a9"></div>
<div style="position:absolute;left:833px;top:425px;width:1px;height:116px;background:#a9a9a9"></div>
<div style="position:absolute;left:589px;top:425px;width:1px;height:116px;background:#a9a9a9"></div>
<div style="position:absolute;left:671px;top:446px;width:1px;height:95px;background:#a9a9a9"></div>
<div style="position:absolute;left:753px;top:446px;width:1px;height:95px;background:#a9a9a9"></div>
<div class="t" style="left:444.50px;top:429.90px;font-size:10.4px;line-height:10.4px;font-weight:700;color:#3c3c3c;">Price Scenario Description</div>
<div class="t" style="left:594.00px;top:429.90px;font-size:10.4px;line-height:10.4px;font-weight:700;color:#3c3c3c;">Discount Rate Nominal</div>
<div class="t" style="left:630.50px;top:450.86px;font-size:10.8px;line-height:10.8px;font-weight:700;color:#333;transform:translateX(-50%)">5.0%</div>
<div class="t" style="left:712.00px;top:450.86px;font-size:10.8px;line-height:10.8px;font-weight:700;color:#333;transform:translateX(-50%)">10.0%</div>
<div class="t" style="left:793.50px;top:450.86px;font-size:10.8px;line-height:10.8px;font-weight:700;color:#333;transform:translateX(-50%)">15.0%</div>
<div class="t" style="left:444.00px;top:473.76px;font-size:10.8px;line-height:10.8px;font-weight:400;color:#222;">Low</div>
<svg style="position:absolute;left:467px;top:473.2px" width="12" height="12" viewBox="0 0 12 12"><circle cx="6" cy="6" r="5.6" fill="#1b6ff0"/><circle cx="6.1" cy="3.3" r="1" fill="#fff"/><path d="M4.6 5 L6.9 5 L6.9 8.6 L7.8 8.6 L7.8 9.4 L4.4 9.4 L4.4 8.6 L5.3 8.6 L5.3 5.8 L4.6 5.8 Z" fill="#fff"/></svg>
<div class="t" style="left:666.50px;top:473.76px;font-size:10.8px;line-height:10.8px;font-weight:400;color:#333;transform:translateX(-100%)">12,195.39</div>
<div class="t" style="left:748.50px;top:473.76px;font-size:10.8px;line-height:10.8px;font-weight:400;color:#333;transform:translateX(-100%)">7,821.65</div>
<div class="t" style="left:829.00px;top:473.76px;font-size:10.8px;line-height:10.8px;font-weight:400;color:#333;transform:translateX(-100%)">5,371.82</div>
<div class="t" style="left:444.00px;top:498.06px;font-size:10.8px;line-height:10.8px;font-weight:400;color:#222;">Base</div>
<svg style="position:absolute;left:471.5px;top:497.5px" width="12" height="12" viewBox="0 0 12 12"><circle cx="6" cy="6" r="5.6" fill="#1b6ff0"/><circle cx="6.1" cy="3.3" r="1" fill="#fff"/><path d="M4.6 5 L6.9 5 L6.9 8.6 L7.8 8.6 L7.8 9.4 L4.4 9.4 L4.4 8.6 L5.3 8.6 L5.3 5.8 L4.6 5.8 Z" fill="#fff"/></svg>
<div class="t" style="left:666.50px;top:498.06px;font-size:10.8px;line-height:10.8px;font-weight:400;color:#333;transform:translateX(-100%)">19,487.62</div>
<div class="t" style="left:748.50px;top:498.06px;font-size:10.8px;line-height:10.8px;font-weight:400;color:#333;transform:translateX(-100%)">12,421.36</div>
<div class="t" style="left:829.00px;top:498.06px;font-size:10.8px;line-height:10.8px;font-weight:400;color:#333;transform:translateX(-100%)">8,521.58</div>
<div class="t" style="left:444.00px;top:522.36px;font-size:10.8px;line-height:10.8px;font-weight:400;color:#222;">High</div>
<svg style="position:absolute;left:469.5px;top:521.8px" width="12" height="12" viewBox="0 0 12 12"><circle cx="6" cy="6" r="5.6" fill="#1b6ff0"/><circle cx="6.1" cy="3.3" r="1" fill="#fff"/><path d="M4.6 5 L6.9 5 L6.9 8.6 L7.8 8.6 L7.8 9.4 L4.4 9.4 L4.4 8.6 L5.3 8.6 L5.3 5.8 L4.6 5.8 Z" fill="#fff"/></svg>
<div class="t" style="left:666.50px;top:522.36px;font-size:10.8px;line-height:10.8px;font-weight:400;color:#333;transform:translateX(-100%)">26,771.21</div>
<div class="t" style="left:748.50px;top:522.36px;font-size:10.8px;line-height:10.8px;font-weight:400;color:#333;transform:translateX(-100%)">17,018.15</div>
<div class="t" style="left:829.00px;top:522.36px;font-size:10.8px;line-height:10.8px;font-weight:400;color:#333;transform:translateX(-100%)">11,670.47</div>
<div style="position:absolute;left:851px;top:96px;width:405px;height:555px;background:#f2f2f1;border:1px solid #c5c5c7;border-right:none;box-sizing:border-box;overflow:hidden;box-shadow:inset 1px 1px 0 0 #f8f8f7"></div>
<div style="position:absolute;left:1256px;top:96px;width:10px;height:555px;background:#f1f1f1"></div>
<div style="position:absolute;left:1256px;top:96px;width:10px;height:534px;background:#c1c1c1"></div>
<div class="t" style="left:861.00px;top:104.80px;font-size:14.3px;line-height:14.3px;font-weight:400;color:#222;">Key Indicators</div>
<svg style="position:absolute;left:956.6px;top:105px" width="12" height="12" viewBox="0 0 12 12"><circle cx="6" cy="6" r="5.2" fill="#1b6ff0"/><path d="M4.4 4.7 Q4.4 3 6 3 Q7.6 3 7.6 4.5 Q7.6 5.3 6.7 5.8 Q6 6.2 6 7" fill="none" stroke="#fff" stroke-width="1.3"/><circle cx="6" cy="8.7" r="0.85" fill="#fff"/></svg>
<div style="position:absolute;left:1207px;top:106px;width:22px;height:14px;background:#fff;border:1px solid #c8c8c8;box-sizing:border-box"></div>
<svg style="position:absolute;left:1207px;top:106px" width="22" height="14"><path d="M10.0 2.5 h2 v4 h2.2 l-3.2 3.2 l-3.2 -3.2 h2.2z" fill="#1f6fe0"/><path d="M6.0 8.5 h3 l2 2 l2 -2 h3 v3.5 h-10z" fill="#1f6fe0"/></svg>
<div style="position:absolute;left:1231px;top:106px;width:14px;height:14px;background:#fff;border:1px solid #c8c8c8;box-sizing:border-box"></div>
<svg style="position:absolute;left:1231px;top:106px" width="14" height="14"><path d="M8.2 2.3 h3.6 v3.6 z" fill="#1f6fe0" stroke="#1f6fe0" stroke-width="0.9" stroke-linejoin="round"/><path d="M10.6 3.6 L8.6 5.6" stroke="#1f6fe0" stroke-width="1.7"/><path d="M2.3 11.8 h3.6 l-3.6 -3.6 z" fill="#1f6fe0" stroke="#1f6fe0" stroke-width="0.9" stroke-linejoin="round"/><path d="M3.6 10.5 L5.6 8.5" stroke="#1f6fe0" stroke-width="1.7"/></svg>
<div class="t" style="left:861.50px;top:125.99px;font-size:11px;line-height:11px;font-weight:400;color:#222;">Unit</div>
<div style="position:absolute;left:880.5px;top:124px;width:91px;height:15px;background:#fff"></div>
<div class="t" style="left:884.00px;top:125.99px;font-size:11px;line-height:11px;font-weight:400;color:#222;">Oil Equivalent</div>
<svg style="position:absolute;left:957.5px;top:127.5px" width="10" height="8"><path d="M1.5 2 L5 5.5 L8.5 2" fill="none" stroke="#111" stroke-width="2.1"/></svg>
<div class="t" style="left:861.00px;top:152.70px;font-size:14.3px;line-height:14.3px;font-weight:400;color:#222;">Economic Model</div>
<div style="position:absolute;left:861px;top:172px;width:112px;height:20px;background:#fff;border:1px solid #d4d4d4;box-sizing:border-box"></div>
<div class="t" style="left:867.20px;top:176.86px;font-size:10.8px;line-height:10.8px;font-weight:700;color:#2b7de0;">Export Asset Model</div>
<div class="t" style="left:861.00px;top:205.40px;font-size:14.3px;line-height:14.3px;font-weight:400;color:#222;">Fiscal Term</div>
<div style="position:absolute;left:861px;top:225px;width:109px;height:20px;background:#fff;border:1px solid #d4d4d4;box-sizing:border-box"></div>
<div class="t" style="left:867.20px;top:228.86px;font-size:10.8px;line-height:10.8px;font-weight:700;color:#2b7de0;">Export Fiscal Term</div>
<div class="t" style="left:861.00px;top:257.60px;font-size:14.3px;line-height:14.3px;font-weight:400;color:#222;">Non Discounted</div>
<div style="position:absolute;left:861px;top:277px;width:385px;height:24px;background:#e9eef3"></div>
<div style="position:absolute;left:861px;top:301px;width:385px;height:25px;background:#fdfdfb"></div>
<div style="position:absolute;left:861px;top:326px;width:385px;height:24px;background:#e9eef3"></div>
<div style="position:absolute;left:861px;top:350px;width:385px;height:25px;background:#fdfdfb"></div>
<div style="position:absolute;left:861px;top:375px;width:385px;height:24px;background:#e9eef3"></div>
<div style="position:absolute;left:861px;top:399px;width:385px;height:24px;background:#fdfdfb"></div>
<div style="position:absolute;left:861px;top:423px;width:385px;height:25px;background:#e9eef3"></div>
<div style="position:absolute;left:861px;top:448px;width:385px;height:24px;background:#fdfdfb"></div>
<div style="position:absolute;left:861px;top:472px;width:385px;height:25px;background:#e9eef3"></div>
<div style="position:absolute;left:861px;top:497px;width:385px;height:24px;background:#fdfdfb"></div>
<div style="position:absolute;left:861px;top:277px;width:386px;height:1px;background:#a9a9a9"></div>
<div style="position:absolute;left:861px;top:301px;width:386px;height:1px;background:#a9a9a9"></div>
<div style="position:absolute;left:861px;top:326px;width:386px;height:1px;background:#a9a9a9"></div>
<div style="position:absolute;left:861px;top:350px;width:386px;height:1px;background:#a9a9a9"></div>
<div style="position:absolute;left:861px;top:375px;width:386px;height:1px;background:#a9a9a9"></div>
<div style="position:absolute;left:861px;top:399px;width:386px;height:1px;background:#a9a9a9"></div>
<div style="position:absolute;left:861px;top:423px;width:386px;height:1px;background:#a9a9a9"></div>
<div style="position:absolute;left:861px;top:448px;width:386px;height:1px;background:#a9a9a9"></div>
<div style="position:absolute;left:861px;top:472px;width:386px;height:1px;background:#a9a9a9"></div>
<div style="position:absolute;left:861px;top:497px;width:386px;height:1px;background:#a9a9a9"></div>
<div style="position:absolute;left:861px;top:521px;width:386px;height:1px;background:#a9a9a9"></div>
<div style="position:absolute;left:861px;top:277px;width:1px;height:245px;background:#a9a9a9"></div>
<div style="position:absolute;left:1246px;top:277px;width:1px;height:245px;background:#a9a9a9"></div>
<div style="position:absolute;left:1192px;top:277px;width:1px;height:245px;background:#a9a9a9"></div>
<div class="t" style="left:866.50px;top:284.06px;font-size:10.8px;line-height:10.8px;font-weight:400;color:#2a2a2a;">IRR (%)</div>
<div class="t" style="left:1241.00px;top:284.06px;font-size:10.8px;line-height:10.8px;font-weight:400;color:#2a2a2a;transform:translateX(-100%)">--</div>
<div class="t" style="left:866.50px;top:308.46px;font-size:10.8px;line-height:10.8px;font-weight:400;color:#2a2a2a;">ATCF per Capital (%)</div>
<div class="t" style="left:1241.00px;top:308.46px;font-size:10.8px;line-height:10.8px;font-weight:400;color:#2a2a2a;transform:translateX(-100%)">576.46</div>
<div class="t" style="left:866.50px;top:332.86px;font-size:10.8px;line-height:10.8px;font-weight:400;color:#2a2a2a;">ATCF per Oil Equivalent (USD/boe)</div>
<div class="t" style="left:1241.00px;top:332.86px;font-size:10.8px;line-height:10.8px;font-weight:400;color:#2a2a2a;transform:translateX(-100%)">32.02</div>
<div class="t" style="left:866.50px;top:357.26px;font-size:10.8px;line-height:10.8px;font-weight:400;color:#2a2a2a;">Drilling Costs (inc E&amp;A) per Oil Equivalent (USD/boe)</div>
<div class="t" style="left:1241.00px;top:357.26px;font-size:10.8px;line-height:10.8px;font-weight:400;color:#2a2a2a;transform:translateX(-100%)">4.95</div>
<div class="t" style="left:866.50px;top:381.66px;font-size:10.8px;line-height:10.8px;font-weight:400;color:#2a2a2a;">Facilities per Oil Equivalent (USD/boe)</div>
<div class="t" style="left:1241.00px;top:381.66px;font-size:10.8px;line-height:10.8px;font-weight:400;color:#2a2a2a;transform:translateX(-100%)">0.60</div>
<div class="t" style="left:866.50px;top:406.06px;font-size:10.8px;line-height:10.8px;font-weight:400;color:#2a2a2a;">F&amp;D per Oil Equivalent (USD/boe)</div>
<div class="t" style="left:1241.00px;top:406.06px;font-size:10.8px;line-height:10.8px;font-weight:400;color:#2a2a2a;transform:translateX(-100%)">5.55</div>
<div class="t" style="left:866.50px;top:430.46px;font-size:10.8px;line-height:10.8px;font-weight:400;color:#2a2a2a;">Dev Cost per Oil Equivalent (USD/boe)</div>
<div class="t" style="left:1241.00px;top:430.46px;font-size:10.8px;line-height:10.8px;font-weight:400;color:#2a2a2a;transform:translateX(-100%)">5.55</div>
<div class="t" style="left:866.50px;top:454.86px;font-size:10.8px;line-height:10.8px;font-weight:400;color:#2a2a2a;">Opcost Per Oil Equivalent (USD/boe)</div>
<div class="t" style="left:1241.00px;top:454.86px;font-size:10.8px;line-height:10.8px;font-weight:400;color:#2a2a2a;transform:translateX(-100%)">8.09</div>
<div class="t" style="left:866.50px;top:479.26px;font-size:10.8px;line-height:10.8px;font-weight:400;color:#2a2a2a;">Total Costs per Oil Equivalent (USD/boe)</div>
<div class="t" style="left:1241.00px;top:479.26px;font-size:10.8px;line-height:10.8px;font-weight:400;color:#2a2a2a;transform:translateX(-100%)">15.00</div>
<div class="t" style="left:866.50px;top:503.66px;font-size:10.8px;line-height:10.8px;font-weight:400;color:#2a2a2a;">Government Take (%)</div>
<div class="t" style="left:1241.00px;top:503.66px;font-size:10.8px;line-height:10.8px;font-weight:400;color:#2a2a2a;transform:translateX(-100%)">47.30</div>
<div class="t" style="left:861.00px;top:526.70px;font-size:14.3px;line-height:14.3px;font-weight:400;color:#222;">Discount at</div>
<div style="position:absolute;left:934px;top:526px;width:54px;height:15px;background:#fff"></div>
<div class="t" style="left:937.50px;top:527.77px;font-size:11.5px;line-height:11.5px;font-weight:400;color:#222;">10.0%</div>
<svg style="position:absolute;left:975.5px;top:529.5px" width="10" height="8"><path d="M1.5 2 L5 5.5 L8.5 2" fill="none" stroke="#111" stroke-width="2.1"/></svg>
<div class="t" style="left:990.00px;top:526.70px;font-size:14.3px;line-height:14.3px;font-weight:400;color:#222;">Nominal</div>
<div style="position:absolute;left:861px;top:548px;width:385px;height:24px;background:#e9eef3"></div>
<div style="position:absolute;left:861px;top:572px;width:385px;height:24px;background:#fdfdfb"></div>
<div style="position:absolute;left:861px;top:596px;width:385px;height:24px;background:#e9eef3"></div>
<div style="position:absolute;left:861px;top:620px;width:385px;height:25px;background:#fdfdfb"></div>
<div style="position:absolute;left:861px;top:645px;width:385px;height:5px;background:#e9eef3"></div>
<div style="position:absolute;left:861px;top:548px;width:386px;height:1px;background:#a9a9a9"></div>
<div style="position:absolute;left:861px;top:572px;width:386px;height:1px;background:#a9a9a9"></div>
<div style="position:absolute;left:861px;top:596px;width:386px;height:1px;background:#a9a9a9"></div>
<div style="position:absolute;left:861px;top:620px;width:386px;height:1px;background:#a9a9a9"></div>
<div style="position:absolute;left:861px;top:645px;width:386px;height:1px;background:#a9a9a9"></div>
<div style="position:absolute;left:861px;top:547px;width:1px;height:103px;background:#a9a9a9"></div>
<div style="position:absolute;left:1246px;top:547px;width:1px;height:103px;background:#a9a9a9"></div>
<div style="position:absolute;left:1166px;top:547px;width:1px;height:103px;background:#a9a9a9"></div>
<div class="t" style="left:866.50px;top:554.56px;font-size:10.8px;line-height:10.8px;font-weight:400;color:#2a2a2a;">BT NPV (MMUSD) 10.0%</div>
<div class="t" style="left:1241.00px;top:554.56px;font-size:10.8px;line-height:10.8px;font-weight:400;color:#2a2a2a;transform:translateX(-100%)">25,983.69</div>
<div class="t" style="left:866.50px;top:578.86px;font-size:10.8px;line-height:10.8px;font-weight:400;color:#2a2a2a;">AT NPV (MMUSD) 10.0%</div>
<div class="t" style="left:1241.00px;top:578.86px;font-size:10.8px;line-height:10.8px;font-weight:400;color:#2a2a2a;transform:translateX(-100%)">12,421.36</div>
<div class="t" style="left:866.50px;top:603.16px;font-size:10.8px;line-height:10.8px;font-weight:400;color:#2a2a2a;">AT NPV per Oil Equivalent (USD/boe) 10.0%</div>
<div class="t" style="left:1241.00px;top:603.16px;font-size:10.8px;line-height:10.8px;font-weight:400;color:#2a2a2a;transform:translateX(-100%)">14.91</div>
<div class="t" style="left:866.50px;top:627.46px;font-size:10.8px;line-height:10.8px;font-weight:400;color:#2a2a2a;">AT NPV per Capital (%) 10.0%</div>
<div class="t" style="left:1241.00px;top:627.46px;font-size:10.8px;line-height:10.8px;font-weight:400;color:#2a2a2a;transform:translateX(-100%)">268.47</div>
<div style="position:absolute;left:851px;top:650px;width:416px;height:11px;background:#fcfcf9"></div>
<div style="position:absolute;left:851px;top:650px;width:416px;height:1px;background:#c5c5c7"></div>
</body></html>
